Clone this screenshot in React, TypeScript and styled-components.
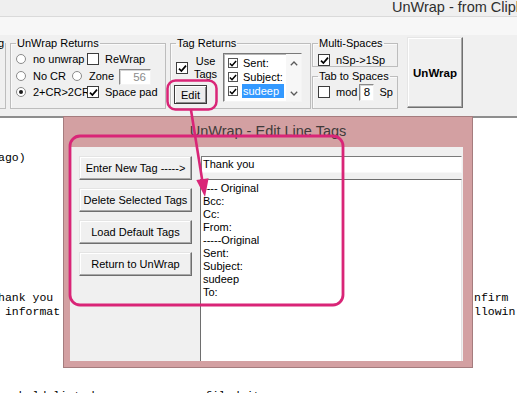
import styled, { createGlobalStyle } from 'styled-components';

const GlobalStyle = createGlobalStyle`
  html, body {
    margin: 0;
    padding: 0;
  }
  body {
    width: 517px;
    height: 393px;
    overflow: hidden;
    background: #ffffff;
    font-family: "Liberation Sans", Arial, sans-serif;
    color: #000;
  }
`;

const blank = (n: number) => Array.from({ length: n }, () => '');

// text lines of the clipboard document, left part and the part right of the dialog
const docLeft = [
  ...blank(2),
  'ago)',
  ...blank(9),
  'hank you',
  ' informat',
  ...blank(5),
  '   held listed                filed it',
];

const docRight = [...blank(12), 'nfirm', 'llowin'];

const tagItems = [
  { label: 'Sent:', selected: false },
  { label: 'Subject:', selected: false },
  { label: 'sudeep', selected: true },
];

const lineTags = [
  '---- Original',
  'Bcc:',
  'Cc:',
  'From:',
  '-----Original',
  'Sent:',
  'Subject:',
  'sudeep',
  'To:',
];

const dialogButtons = [
  'Enter New Tag ----->',
  'Delete Selected Tags',
  'Load Default Tags',
  'Return to UnWrap',
];

function CheckMark() {
  return (
    <svg width="9" height="9" viewBox="0 0 9 9">
      <path d="M1 4.6 L3.4 7 L8 1.6" fill="none" stroke="#000" strokeWidth="1.7" />
    </svg>
  );
}

function Chevron({ up }: { up?: boolean }) {
  return (
    <svg width="8" height="5" viewBox="0 0 8 5">
      <path d={up ? 'M0.8 4.2 L4 1 L7.2 4.2' : 'M0.8 0.8 L4 4 L7.2 0.8'} fill="none" stroke="#5a5a5a" strokeWidth="1.3" />
    </svg>
  );
}

function App() {
  return (
    <Screen>
      <GlobalStyle />
      <TitleBar>UnWrap - from Clipboard</TitleBar>
      <MenuStrip />
      <Toolbar>
        <StubGroup>
          <Legend>g</Legend>
        </StubGroup>

        <Group $w={156} $h={72} $ml={4}>
          <Legend>UnWrap Returns</Legend>
          <Rows>
            <Row>
              <Option $w={71} $gap={7}><Radio />no unwrap</Option>
              <Option $gap={6}><Check /> ReWrap</Option>
            </Row>
            <Row>
              <Option $w={56} $gap={7}><Radio />No CR</Option>
              <Option $w={47} $gap={7}><Radio />Zone</Option>
              <SmallInput $w={32} $ml={0} $mt={3} $disabled>56</SmallInput>
            </Row>
            <Row>
              <Option $w={71} $gap={7}><Radio $on />2+CR&gt;2CR</Option>
              <Option $gap={6}><Check><CheckMark /></Check>Space pad</Option>
            </Row>
          </Rows>
        </Group>

        <Group $w={141} $h={72} $ml={4}>
          <Legend>Tag Returns</Legend>
          <TagBody>
            <TagColumn>
              <UseRow>
                <Check><CheckMark /></Check>
                <UseLabel>Use<br />Tags</UseLabel>
              </UseRow>
              <EditButton>Edit</EditButton>
            </TagColumn>
            <TagList>
              <TagItems>
                {tagItems.map((item) => (
                  <TagRow key={item.label}>
                    <ListCheck><CheckMark /></ListCheck>
                    <TagText $selected={item.selected}>{item.label}</TagText>
                  </TagRow>
                ))}
              </TagItems>
              <ScrollTrack>
                <Chevron up />
                <Chevron />
              </ScrollTrack>
            </TagList>
          </TagBody>
        </Group>

        <Stack>
          <Group $w={86} $h={30}>
            <Legend>Multi-Spaces</Legend>
            <SpaceRow $h={12} $pt={5}>
              <Option $gap={6}><Check><CheckMark /></Check>nSp-&gt;1Sp</Option>
            </SpaceRow>
          </Group>
          <Group $w={86} $h={39}>
            <Legend>Tab to Spaces</Legend>
            <SpaceRow $h={18} $pt={1}>
              <Option $gap={6}><Check />mod</Option>
              <SmallInput $w={15} $h={17} $ml={2} $center>8</SmallInput>
              <Unit>Sp</Unit>
            </SpaceRow>
          </Group>
        </Stack>

        <BigButton>UnWrap</BigButton>
      </Toolbar>

      <Document>
        <DocText $shift={-2}>{docLeft.join('\n')}</DocText>
        <DocText $shift={0}>{docRight.join('\n')}</DocText>
      </Document>

      <Dialog>
        <DialogTitle>UnWrap - Edit Line Tags</DialogTitle>
        <DialogClient>
          <ButtonColumn>
            {dialogButtons.map((b) => (
              <DialogButton key={b}>{b}</DialogButton>
            ))}
          </ButtonColumn>
          <EditorColumn>
            <TagInput>Thank you</TagInput>
            <LineTagList>
              {lineTags.map((t, i) => (
                <LineTag key={i}>{t}</LineTag>
              ))}
            </LineTagList>
          </EditorColumn>
        </DialogClient>
      </Dialog>

      <Overlay width="517" height="393" viewBox="0 0 517 393">
        <rect x="167.5" y="80.5" width="49" height="29" rx="8" fill="none" stroke="#d92577" strokeWidth="2.5" />
        <rect x="70" y="136" width="273" height="169" rx="10" fill="none" stroke="#d92577" strokeWidth="2.8" />
        <line x1="191" y1="110" x2="202.5" y2="182" stroke="#d92577" strokeWidth="2.6" />
        <polygon points="205,197 196.3,180.1 208.6,178.2" fill="#d92577" />
      </Overlay>
    </Screen>
  );
}

const Screen = styled.div`
  position: relative;
  width: 517px;
  height: 393px;
  overflow: hidden;
  display: flex;
  flex-direction: column;
  background: #fff;
`;

const TitleBar = styled.div`
  flex: none;
  height: 16px;
  padding-left: 392px;
  background: #efefef;
  border-bottom: 1px solid #dadada;
  font-size: 14.5px;
  line-height: 15px;
  color: #2e2e2e;
  white-space: nowrap;
  overflow: hidden;
`;

const MenuStrip = styled.div`
  flex: none;
  height: 18px;
  background: #f7f7f7;
`;

const Toolbar = styled.div`
  flex: none;
  height: 83px;
  box-sizing: border-box;
  padding-top: 2px;
  display: flex;
  align-items: flex-start;
  background: #f0f0f0;
  border-bottom: 2px solid #8e8e8e;
  font-size: 11px;
`;

const Group = styled.fieldset<{ $w: number; $h: number; $ml?: number }>`
  box-sizing: border-box;
  width: ${({ $w }) => $w}px;
  height: ${({ $h }) => $h}px;
  margin: 0 0 0 ${({ $ml }) => $ml ?? 0}px;
  padding: 0 0 0 5px;
  min-inline-size: 0;
  border: 1px solid #bdbdbd;
  box-shadow: inset 1px 1px 0 #fafafa;
`;

const StubGroup = styled.fieldset`
  box-sizing: border-box;
  width: 20px;
  height: 72px;
  margin: 0 0 0 -14px;
  padding: 0;
  direction: rtl;
  border: 1px solid #bdbdbd;
`;

const Legend = styled.legend`
  padding: 0 1px;
  font-size: 11px;
  line-height: 12px;
  color: #000;
  white-space: nowrap;
`;

const Rows = styled.div`
  padding-top: 2px;
  display: grid;
  grid-auto-rows: 16.5px;
`;

const Row = styled.div`
  display: flex;
  align-items: center;
`;

const Option = styled.label<{ $w?: number; $gap: number }>`
  display: flex;
  align-items: center;
  gap: ${({ $gap }) => $gap}px;
  flex: none;
  width: ${({ $w }) => ($w ? `${$w}px` : 'auto')};
  white-space: nowrap;
  font-size: 11px;
`;

const Radio = styled.span<{ $on?: boolean }>`
  flex: none;
  box-sizing: border-box;
  width: 10px;
  height: 10px;
  border-radius: 50%;
  border: 1px solid #8a8a8a;
  background: #fff;
  display: flex;
  align-items: center;
  justify-content: center;

  &::after {
    content: '';
    width: 4px;
    height: 4px;
    border-radius: 50%;
    background: ${({ $on }) => ($on ? '#1a1a1a' : 'transparent')};
  }
`;

const Check = styled.span`
  flex: none;
  box-sizing: border-box;
  width: 12px;
  height: 12px;
  border: 1px solid #3c3c3c;
  background: #fff;
  display: flex;
  align-items: center;
  justify-content: center;
`;

const ListCheck = styled(Check)`
  width: 10px;
  height: 10px;
  border-color: #555;
`;

const SmallInput = styled.span<{
  $w: number;
  $h?: number;
  $ml?: number;
  $mt?: number;
  $disabled?: boolean;
  $center?: boolean;
}>`
  flex: none;
  box-sizing: border-box;
  width: ${({ $w }) => $w}px;
  height: ${({ $h }) => $h ?? 16}px;
  margin: ${({ $mt }) => $mt ?? 0}px 0 0 ${({ $ml }) => $ml ?? 0}px;
  padding: 0 ${({ $center }) => ($center ? 0 : 4)}px 0 0;
  display: flex;
  align-items: center;
  justify-content: ${({ $center }) => ($center ? 'center' : 'flex-end')};
  background: #fff;
  border-style: solid;
  border-width: 1px;
  border-color: #8a8a8a #f4f4f4 #f4f4f4 #8a8a8a;
  box-shadow: inset 1px 1px 0 #d4d4d4;
  color: ${({ $disabled }) => ($disabled ? '#8c8c8c' : '#000')};
  font-size: 11.5px;
`;

const TagBody = styled.div`
  display: flex;
  padding-top: 6px;
`;

const TagColumn = styled.div`
  width: 47px;
  flex: none;
  display: flex;
  flex-direction: column;
`;

const UseRow = styled.div`
  display: flex;
  align-items: center;
  gap: 4px;
`;

const UseLabel = styled.span`
  width: 27px;
  text-align: center;
  font-size: 11px;
  line-height: 13px;
`;

const EditButton = styled.div`
  box-sizing: border-box;
  width: 33px;
  height: 19px;
  margin: 4px 0 0 -2px;
  display: flex;
  align-items: center;
  justify-content: center;
  background: #ececec;
  border: 1px solid #3a3a3a;
  box-shadow: inset 1px 1px 0 #ffffff, inset -1px -1px 0 #8a8a8a;
  font-size: 11px;
`;

const TagList = styled.div`
  box-sizing: border-box;
  width: 79px;
  height: 49px;
  margin-top: -2px;
  display: flex;
  background: #fff;
  border-style: solid;
  border-width: 1px;
  border-color: #7a7a7a #f4f4f4 #f4f4f4 #7a7a7a;
  box-shadow: inset 1px 1px 0 #b8b8b8;
`;

const TagItems = styled.div`
  flex: 1;
  padding: 2px 2px 0 4px;
  display: grid;
  grid-auto-rows: 14px;
`;

const TagRow = styled.div`
  display: flex;
  align-items: center;
  gap: 4px;
`;

const TagText = styled.span<{ $selected?: boolean }>`
  flex: 1;
  height: 14px;
  line-height: 14px;
  padding-left: 1px;
  font-size: 11px;
  background: ${({ $selected }) => ($selected ? '#3399ff' : 'transparent')};
  color: ${({ $selected }) => ($selected ? '#fff' : '#000')};
`;

const ScrollTrack = styled.div`
  width: 15px;
  flex: none;
  display: flex;
  flex-direction: column;
  justify-content: space-between;
  align-items: center;
  padding: 7px 0 5px;
  box-sizing: border-box;
  background: #f7f7f7;
`;

const Stack = styled.div`
  margin-left: 1px;
  display: flex;
  flex-direction: column;
  gap: 3px;
`;

const SpaceRow = styled.div<{ $h: number; $pt: number }>`
  height: ${({ $h }) => $h}px;
  padding-top: ${({ $pt }) => $pt}px;
  display: flex;
  align-items: center;
`;

const Unit = styled.span`
  margin-left: 5px;
  font-size: 11px;
`;

const BigButton = styled.div`
  box-sizing: border-box;
  width: 56px;
  height: 71px;
  margin-left: 9px;
  display: flex;
  align-items: center;
  justify-content: center;
  background: #f0f0f0;
  border-style: solid;
  border-width: 1px;
  border-color: #e6e6e6 #707070 #707070 #e6e6e6;
  box-shadow: inset -1px -1px 0 #a8a8a8, inset 1px 1px 0 #ffffff;
  font-size: 11.5px;
  font-weight: bold;
`;

const Document = styled.div`
  flex: 1;
  display: grid;
  grid-template-columns: 474px 1fr;
  background: #fff;
  overflow: hidden;
`;

const DocText = styled.pre<{ $shift: number }>`
  margin: 0 0 0 ${({ $shift }) => $shift}px;
  padding-top: 5px;
  overflow: hidden;
  font-family: "Liberation Mono", "Courier New", monospace;
  font-size: 11.5px;
  line-height: 14px;
  color: #000;
`;

const Dialog = styled.div`
  position: absolute;
  left: 63px;
  top: 116px;
  width: 410px;
  height: 252px;
  box-sizing: border-box;
  display: flex;
  flex-direction: column;
  background: #d3a0a2;
  border: 1px solid #a57c7e;
`;

const DialogTitle = styled.div`
  flex: none;
  height: 30px;
  line-height: 29px;
  text-align: center;
  font-size: 14.5px;
  color: #403a3a;
`;

const DialogClient = styled.div`
  flex: 1;
  margin: 0 9px 6px 6px;
  display: grid;
  grid-template-columns: 130px 1fr;
  background: #f0f0f0;
`;

const ButtonColumn = styled.div`
  padding: 9px 0 0 9px;
  display: flex;
  flex-direction: column;
  gap: 8px;
`;

const DialogButton = styled.div`
  box-sizing: border-box;
  width: 113px;
  height: 24px;
  display: flex;
  align-items: center;
  justify-content: center;
  background: #f0f0f0;
  border-style: solid;
  border-width: 1px;
  border-color: #e4e4e4 #6e6e6e #6e6e6e #e4e4e4;
  box-shadow: inset -1px -1px 0 #a9a9a9, inset 1px 1px 0 #ffffff;
  font-size: 11px;
  white-space: nowrap;
`;

const EditorColumn = styled.div`
  padding: 9px 1px 0 0;
  display: flex;
  flex-direction: column;
  min-height: 0;
`;

const TagInput = styled.div`
  box-sizing: border-box;
  height: 17px;
  margin: 0 0 6px 1px;
  padding-left: 1px;
  line-height: 15px;
  background: #fff;
  border-style: solid;
  border-width: 1px;
  border-color: #7a7a7a #f8f8f8 #f8f8f8 #7a7a7a;
  font-size: 11px;
`;

const LineTagList = styled.div`
  flex: 1;
  padding: 2px 0 0 2px;
  background: #fff;
  border-left: 1px solid #6e6e6e;
  border-top: 1px solid #6e6e6e;
  border-right: 1px solid #e2e2e2;
`;

const LineTag = styled.div`
  font-size: 11px;
  line-height: 13px;
  white-space: nowrap;
`;

const Overlay = styled.svg`
  position: absolute;
  left: 0;
  top: 0;
  pointer-events: none;
`;

export default App;
